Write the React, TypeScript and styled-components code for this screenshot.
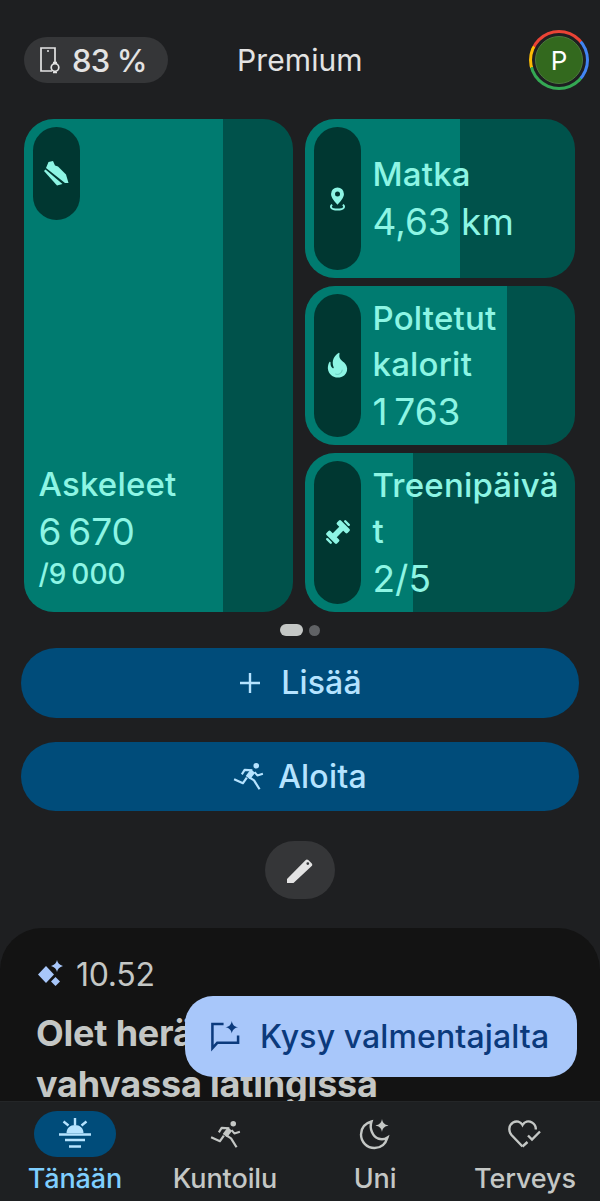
import styled, { createGlobalStyle } from "styled-components";

const GlobalStyle = createGlobalStyle`
  html, body {
    margin: 0;
    padding: 0;
    background: #1e1f21;
  }
  * {
    box-sizing: border-box;
  }
`;

const font = `Inter, Roboto, "Liberation Sans", sans-serif`;

const Page = styled.div`
  position: relative;
  width: 600px;
  height: 1201px;
  overflow: hidden;
  display: flex;
  flex-direction: column;
  background: #1e1f21;
  font-family: ${font};
`;

const Header = styled.header`
  display: flex;
  align-items: center;
  height: 60px;
  margin-top: 30px;
  padding: 0 11px 0 24px;
`;

const Battery = styled.div`
  display: flex;
  align-items: center;
  gap: 9px;
  width: 144px;
  height: 46px;
  padding-left: 15px;
  border-radius: 23px;
  background: #353638;
  color: #e3e3e3;
  font-size: 31px;
  font-weight: 500;
  letter-spacing: -0.8px;
`;

const PlanName = styled.div`
  margin-left: 69px;
  color: #e3e3e3;
  font-size: 30px;
  font-weight: 400;
  letter-spacing: 0.1px;
`;

const AvatarRing = styled.div`
  width: 60px;
  height: 60px;
  margin-left: auto;
  padding: 3px;
  border-radius: 50%;
  background: conic-gradient(
    #ea4335 0deg 50deg,
    #4285f4 50deg 130deg,
    #34a853 130deg 255deg,
    #fbbc04 255deg 298deg,
    #ea4335 298deg 360deg
  );
`;

const AvatarGap = styled.div`
  width: 100%;
  height: 100%;
  padding: 3px;
  border-radius: 50%;
  background: #1e1f21;
`;

const Avatar = styled.div`
  display: flex;
  align-items: center;
  justify-content: center;
  width: 100%;
  height: 100%;
  border-radius: 50%;
  border: 1px solid #4b7a3c;
  background: #33691e;
  color: #ffffff;
  font-size: 26px;
`;

const Grid = styled.section`
  display: grid;
  grid-template-columns: 269px 270px;
  grid-template-rows: 159px 159.5px 159.5px;
  column-gap: 12px;
  row-gap: 7.5px;
  margin: 29px 0 0 24px;
  width: 551px;
  height: 493px;
`;

const StatCard = styled.div<{ $percent: number; $tall?: boolean }>`
  display: flex;
  flex-direction: ${(p) => (p.$tall ? "column" : "row")};
  gap: 11.5px;
  padding: 8px 16px 8px 9px;
  border-radius: 30px;
  grid-row: ${(p) => (p.$tall ? "1 / span 3" : "auto")};
  background: linear-gradient(
    90deg,
    #007b70 ${(p) => p.$percent}%,
    #00524b ${(p) => p.$percent}%
  );
  color: #8df5e4;
`;

const IconPill = styled.div<{ $short?: boolean }>`
  flex: none;
  display: flex;
  align-items: center;
  justify-content: center;
  width: 47px;
  height: ${(p) => (p.$short ? "93px" : "143px")};
  border-radius: 24px;
  background: #003731;
`;

const StatText = styled.div`
  flex: 1;
  min-width: 0;
  display: flex;
  flex-direction: column;
  justify-content: center;
`;

const StatLabel = styled.div`
  font-size: 33px;
  font-weight: 500;
  line-height: 46px;
  letter-spacing: 0.2px;
  overflow-wrap: anywhere;
`;

const StatValue = styled.div`
  font-size: 37px;
  font-weight: 400;
  line-height: 49px;
`;

const TallCardBody = styled.div`
  display: flex;
  flex-direction: column;
  margin-top: auto;
  padding: 0 0 12px 5.5px;
`;

const StatGoal = styled.div`
  font-size: 28px;
  font-weight: 500;
  line-height: 36px;
`;

const Dots = styled.div`
  display: flex;
  justify-content: center;
  align-items: center;
  gap: 6px;
  height: 12px;
  margin-top: 12px;
`;

const Dot = styled.span<{ $active?: boolean }>`
  width: ${(p) => (p.$active ? "23px" : "11px")};
  height: ${(p) => (p.$active ? "12px" : "11px")};
  border-radius: 6px;
  background: ${(p) => (p.$active ? "#c4c7c5" : "#606265")};
`;

const Actions = styled.div`
  display: flex;
  flex-direction: column;
  gap: 24px;
  margin: 12px 21px 0;
`;

const ActionButton = styled.button<{ $gap: number }>`
  display: flex;
  align-items: center;
  justify-content: center;
  gap: ${(p) => p.$gap}px;
  height: 69.5px;
  border: none;
  border-radius: 35px;
  background: #004c7a;
  color: #b5e3ff;
  font-family: ${font};
  font-size: 32px;
  font-weight: 500;
  letter-spacing: 0.2px;
`;

const EditButton = styled.button`
  display: flex;
  align-items: center;
  justify-content: center;
  align-self: center;
  width: 70px;
  height: 58px;
  margin-top: 30px;
  border: none;
  border-radius: 29px;
  background: #353638;
`;

const Panel = styled.section`
  flex: 1;
  min-height: 0;
  overflow: hidden;
  margin-top: 29px;
  padding: 28px 20px 0 36px;
  border-radius: 42px 42px 0 0;
  background: #131313;
`;

const TimeRow = styled.div`
  display: flex;
  align-items: center;
  gap: 12px;
  height: 36px;
  color: #c4c7c5;
  font-size: 32px;
  letter-spacing: -0.3px;
`;

const InsightTitle = styled.h2`
  margin: 16px 0 0;
  color: #c4c7c5;
  font-size: 36px;
  font-weight: 700;
  line-height: 51px;
  letter-spacing: -0.2px;
`;

const AskCoach = styled.button`
  position: absolute;
  left: 185px;
  top: 996px;
  display: flex;
  align-items: center;
  gap: 19px;
  width: 392px;
  height: 81px;
  padding-left: 25px;
  border: none;
  border-radius: 28px;
  background: #a8c7fa;
  color: #0b3a7c;
  font-family: ${font};
  font-size: 32px;
  font-weight: 500;
  letter-spacing: 0.1px;
`;

const Nav = styled.nav`
  flex: none;
  display: grid;
  grid-template-columns: repeat(4, 150px);
  height: 100px;
  padding-top: 9px;
  border-top: 1px solid #242628;
  background: #1e2022;
`;

const NavItem = styled.div<{ $active?: boolean }>`
  display: flex;
  flex-direction: column;
  align-items: center;
  color: ${(p) => (p.$active ? "#7fcfff" : "#c4c7c5")};
  font-size: 27px;
  font-weight: 500;
  line-height: 30px;
  letter-spacing: -0.1px;
`;

const NavIcon = styled.div<{ $active?: boolean }>`
  display: flex;
  align-items: center;
  justify-content: center;
  width: 82px;
  height: 46px;
  margin-bottom: 7px;
  border-radius: 23px;
  background: ${(p) => (p.$active ? "#004c7a" : "transparent")};
`;

const PhoneWatchIcon = () => (
  <svg width="24" height="28" viewBox="0 0 24 28" fill="none" stroke="#e3e3e3" strokeWidth="1.700">
    <path d="M13 25H2V2h14v14" />
    <path d="M8 5h2" />
    <circle cx="16" cy="21.500" r="3.800" />
    <path d="M14 16.500h4M14 26.500h4" />
  </svg>
);

const ShoeIcon = () => (
  <svg width="25" height="25" viewBox="0 0 25 25" fill="#8df5e4">
    <path d="M2 7 4.500 1 9 0l2 4.500 3 1 8 8 2.500 8.500-3.500 0z" />
    <path d="M0 10l1.500-1.500L18.500 23 13 24.500z" />
  </svg>
);

const PinIcon = () => (
  <svg width="19" height="25" viewBox="0 0 18 26" fill="none" stroke="#8df5e4">
    <path
      d="M9 1.500a6.700 6.700 0 0 0-6.700 6.700C2.300 12 6 16 9 19.500c3-3.500 6.700-7.500 6.700-11.300A6.700 6.700 0 0 0 9 1.500Z"
      fill="#8df5e4"
      stroke="none"
    />
    <circle cx="9" cy="8.200" r="2.600" fill="#003731" stroke="none" />
    <path d="M3.500 19.500C1 21 1.500 24.500 9 24.500s8-3.500 5.500-5" strokeWidth="2" />
  </svg>
);

const FlameIcon = () => (
  <svg width="29" height="29" viewBox="0 0 24 24" fill="#8df5e4">
    <path d="M19.480 12.350c-1.570-4.080-7.160-4.300-5.810-10.230.1-.44-.37-.78-.75-.55C9.290 3.710 6.680 8 8.870 13.620c.18.46-.36.89-.75.59-1.810-1.370-2-3.340-1.840-4.750.06-.52-.62-.77-.91-.34C4.690 10.160 4 11.840 4 14.370c.38 5.600 5.110 7.320 6.810 7.540 2.430.31 5.060-.14 6.950-1.870 2.080-1.930 2.840-5.010 1.720-7.690z" />
    <path d="M10.200 19c2.500 1.200 5.600-.6 5.700-3.500" fill="none" stroke="#66c9bb" strokeWidth="0.800" />
  </svg>
);

const DumbbellIcon = () => (
  <svg width="26" height="26" viewBox="0 0 28 28" fill="#8df5e4">
    <g transform="rotate(-45 14 14)">
      <rect x="-1" y="10" width="2.600" height="8" rx="1.300" />
      <rect x="3" y="6" width="6" height="16" rx="1.500" />
      <rect x="8" y="11" width="12" height="6" />
      <rect x="19" y="6" width="6" height="16" rx="1.500" />
      <rect x="26.400" y="10" width="2.600" height="8" rx="1.300" />
    </g>
  </svg>
);

const PlusIcon = () => (
  <svg width="24" height="24" viewBox="0 0 24 24" fill="none" stroke="#b5e3ff" strokeWidth="2.400">
    <path d="M12 2v20M2 12h20" />
  </svg>
);

const RunnerIcon = ({ color }: { color: string }) => (
  <svg width="31" height="28" viewBox="0 0 28 25" fill="none" stroke={color} strokeLinejoin="round">
    <circle cx="21" cy="3.300" r="2.500" fill={color} stroke="none" />
    <path d="M18 8 13.500 14" strokeWidth="5" />
    <path d="M17.500 7.300 10.500 7 8 11M19.500 9l2.500 3 5-1.500" strokeWidth="1.900" />
    <path d="M12.500 14 9 19 1 15.500M14.500 13.500 19 16.500 24 24.500" strokeWidth="2" />
  </svg>
);

const PencilIcon = () => (
  <svg width="30" height="30" viewBox="0 0 30 30" fill="#e3e3e3">
    <path d="M2 24 20.500 5.200c.8-.8 2-.8 2.800-.1l3.300 3.100c.9.800.9 2 .1 2.800L8.500 28H2zM22.800 7.200a1.400 1.400 0 1 0 0 2.800 1.400 1.400 0 0 0 0-2.800z" fillRule="evenodd" />
  </svg>
);

const SparklesIcon = () => (
  <svg width="28" height="30" viewBox="0 0 28 30" fill="#a8c7fa">
    <path d="M10 7 18 15.500 10 24 2 15.500z" />
    <path d="M21 1c.5 3 2.500 5 6 6-3.500 1-5.500 3-6 6-.5-3-2.500-5-6-6 3.500-1 5.500-3 6-6z" />
    <path d="M19.500 18 24 22.500 19.500 27 15 22.500z" />
  </svg>
);

const ChatSparkIcon = () => (
  <svg width="31" height="31" viewBox="0 0 32 32" fill="none" stroke="#0b3a7c" strokeWidth="2.600">
    <path d="M14 3H2.500v25l5-5.500H29V15" />
    <path
      d="M22.500 0c.6 3.600 2.400 5.700 6.500 6.500-4.100.8-5.900 2.900-6.500 6.500-.6-3.600-2.400-5.700-6.500-6.500 4.100-.8 5.900-2.900 6.500-6.500z"
      fill="#0b3a7c"
      stroke="none"
    />
  </svg>
);

const SunriseIcon = () => (
  <svg width="34" height="34" viewBox="0 0 34 34" fill="none" stroke="#b5e3ff" strokeWidth="2.400">
    <path d="M17 1v7M5.500 4.500l5 4M28.500 4.500l-5 4M1 17.500h32M7 23h20M11 29.500h12" />
    <path d="M8.500 16c0-5 3.700-8 8.500-8s8.500 3 8.500 8z" fill="#b5e3ff" stroke="none" />
  </svg>
);

const MoonSparkIcon = () => (
  <svg width="32" height="32" viewBox="0 0 32 32" fill="none" stroke="#c4c7c5" strokeWidth="2.400">
    <path d="M12.500 3.500C5.500 5.500 2 10.500 2 16.500 2 24 8 30 15.500 30c6 0 11-3.500 13-10.500-3 2-6 2.200-9.500 1C14 18.500 10 11 12.500 3.500z" />
    <path
      d="M23 1c.6 3.800 2.400 5.600 6.500 6.500C25.400 8.400 23.600 10.200 23 14c-.6-3.800-2.400-5.600-6.500-6.500C20.600 6.600 22.400 4.800 23 1z"
      fill="#c4c7c5"
      stroke="none"
    />
  </svg>
);

const HeartCheckIcon = () => (
  <svg width="34" height="30" viewBox="0 0 34 30" fill="none" stroke="#c4c7c5" strokeWidth="2.400">
    <path d="M14.500 27.500 3.500 16C0 12 1 6 5 3.500c3.500-2 7.500-1 9.500 2.500 2-3.500 6-4.500 9.500-2.500 2.500 1.500 4 4 3.800 7" />
    <path d="M14.500 27.500l5-4.500M20 16.500l4 4 8-8" />
  </svg>
);

const App = () => {
  return (
    <Page>
      <GlobalStyle />
      <Header>
        <Battery>
          <PhoneWatchIcon />
          83 %
        </Battery>
        <PlanName>Premium</PlanName>
        <AvatarRing>
          <AvatarGap>
            <Avatar>P</Avatar>
          </AvatarGap>
        </AvatarRing>
      </Header>

      <Grid>
        <StatCard $tall $percent={74}>
          <IconPill $short>
            <ShoeIcon />
          </IconPill>
          <TallCardBody>
            <StatLabel>Askeleet</StatLabel>
            <StatValue>6{"\u202f"}670</StatValue>
            <StatGoal>/9{"\u202f"}000</StatGoal>
          </TallCardBody>
        </StatCard>
        <StatCard $percent={57.4}>
          <IconPill>
            <PinIcon />
          </IconPill>
          <StatText>
            <StatLabel>Matka</StatLabel>
            <StatValue>4,63 km</StatValue>
          </StatText>
        </StatCard>
        <StatCard $percent={74.8}>
          <IconPill>
            <FlameIcon />
          </IconPill>
          <StatText>
            <StatLabel>Poltetut kalorit</StatLabel>
            <StatValue>1{"\u202f"}763</StatValue>
          </StatText>
        </StatCard>
        <StatCard $percent={40}>
          <IconPill>
            <DumbbellIcon />
          </IconPill>
          <StatText>
            <StatLabel>Treenipäivät</StatLabel>
            <StatValue>2/5</StatValue>
          </StatText>
        </StatCard>
      </Grid>

      <Dots>
        <Dot $active />
        <Dot />
      </Dots>

      <Actions>
        <ActionButton $gap={19}>
          <PlusIcon />
          Lisää
        </ActionButton>
        <ActionButton $gap={14}>
          <RunnerIcon color="#b5e3ff" />
          Aloita
        </ActionButton>
      </Actions>

      <EditButton>
        <PencilIcon />
      </EditButton>

      <Panel>
        <TimeRow>
          <SparklesIcon />
          10.52
        </TimeRow>
        <InsightTitle>
          Olet herännyt
          <br />
          vahvassa latingissa
        </InsightTitle>
      </Panel>

      <Nav>
        <NavItem $active>
          <NavIcon $active>
            <SunriseIcon />
          </NavIcon>
          Tänään
        </NavItem>
        <NavItem>
          <NavIcon>
            <RunnerIcon color="#c4c7c5" />
          </NavIcon>
          Kuntoilu
        </NavItem>
        <NavItem>
          <NavIcon>
            <MoonSparkIcon />
          </NavIcon>
          Uni
        </NavItem>
        <NavItem>
          <NavIcon>
            <HeartCheckIcon />
          </NavIcon>
          Terveys
        </NavItem>
      </Nav>

      <AskCoach>
        <ChatSparkIcon />
        Kysy valmentajalta
      </AskCoach>
    </Page>
  );
};

export default App;
